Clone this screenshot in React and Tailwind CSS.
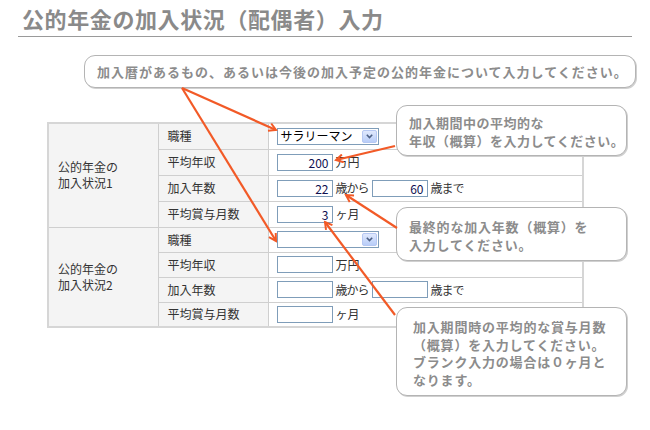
import React from "react";

const jp = { fontFamily: '"Noto Sans CJK JP", "Noto Sans", sans-serif' };

function Select({ value }) {
  return (
    <div className="flex items-center justify-between w-[102px] h-[17px] border border-[#7f9db9] bg-white pl-[3px] pr-[1px]">
      <span className="text-[12px] leading-none text-black">{value}</span>
      <div className="w-[15px] h-[13px] rounded-[2px] border border-[#b6c8f3] bg-gradient-to-b from-[#e0e9fd] to-[#b9cdf8] flex items-center justify-center">
        <svg width="7" height="5" viewBox="0 0 7 5">
          <path d="M0.8 0.8 L3.5 3.6 L6.2 0.8" fill="none" stroke="#4d6185" strokeWidth="1.6" />
        </svg>
      </div>
    </div>
  );
}

function Field({ value }) {
  return (
    <div className="w-[56px] h-[17px] border border-[#7f9db9] bg-white pr-[3px] text-right text-[12px] leading-[15px] text-[#101050]">
      {value}
    </div>
  );
}

function Group({ label, data, rowH }) {
  const th = "border border-[#cfcfcf] bg-[#f4f4f4] text-left font-normal text-[12px] text-[#333] align-middle";
  const td = "border border-[#cfcfcf] bg-white pl-[8px] align-middle";
  return (
    <>
      <tr className={rowH}>
        <th rowSpan={4} className={th + " pl-[9px] leading-[16px]"}>
          公的年金の
          <br />
          {label}
        </th>
        <th className={th + " pl-[9px]"}>職種</th>
        <td className={td}>
          <Select value={data.job} />
        </td>
      </tr>
      <tr className={rowH}>
        <th className={th + " pl-[9px]"}>平均年収</th>
        <td className={td}>
          <div className="flex items-center gap-[3px] text-[12px] text-[#333]">
            <Field value={data.income} />
            <span>万円</span>
          </div>
        </td>
      </tr>
      <tr className={rowH}>
        <th className={th + " pl-[9px]"}>加入年数</th>
        <td className={td}>
          <div className="flex items-center text-[12px] text-[#333]">
            <Field value={data.from} />
            <span className="ml-[3px] mr-[3px] tracking-[-1px]">歳から</span>
            <Field value={data.to} />
            <span className="ml-[3px] tracking-[-1px]">歳まで</span>
          </div>
        </td>
      </tr>
      <tr className={rowH}>
        <th className={th + " pl-[9px]"}>平均賞与月数</th>
        <td className={td}>
          <div className="flex items-center gap-[3px] text-[12px] text-[#333]">
            <Field value={data.bonus} />
            <span>ヶ月</span>
          </div>
        </td>
      </tr>
    </>
  );
}

function Callout({ className, children }) {
  return (
    <div
      className={
        "absolute bg-white border border-[#b4b4b4] rounded-[11px] shadow-[1px_1px_0_#d0d0d0] text-[13px] font-bold text-[#8c8c8c] leading-[17.5px] whitespace-nowrap " +
        className
      }
    >
      {children}
    </div>
  );
}

function Arrows() {
  const lines = [
    [182, 88, 276, 130],
    [182, 88, 276, 241],
    [395, 146, 336, 160],
    [397, 228, 346, 195],
    [395, 315, 325, 222],
  ];
  return (
    <svg className="absolute left-0 top-0 pointer-events-none" width="650" height="430">
      <defs>
        <marker id="head" markerWidth="10" markerHeight="10" refX="8" refY="5" orient="auto" markerUnits="userSpaceOnUse">
          <path d="M1 1 L8 5 L1 9" fill="none" stroke="#f25a27" strokeWidth="2" />
        </marker>
      </defs>
      {lines.map(([x1, y1, x2, y2], i) => (
        <line key={i} x1={x1} y1={y1} x2={x2} y2={y2} stroke="#f25a27" strokeWidth="2.2" markerEnd="url(#head)" />
      ))}
    </svg>
  );
}

export default function App() {
  return (
    <div className="relative w-[650px] h-[430px] bg-white overflow-hidden" style={jp}>
      <div className="mx-[18px] h-[37px] border-b border-[#9a9a9a] pl-[4px] pt-[3px] text-[22px] font-bold text-[#8a8a8a] leading-[30px] tracking-[0.6px]">
        公的年金の加入状況（配偶者）入力
      </div>

      <table className="ml-[47px] mt-[85px] w-[537px] border-collapse border-2 border-[#d6d6d6]">
        <colgroup>
          <col className="w-[110px]" />
          <col className="w-[110px]" />
          <col />
        </colgroup>
        <tbody>
          <Group label="加入状況1" rowH="h-[26px]" data={{ job: "サラリーマン", income: "200", from: "22", to: "60", bonus: "3" }} />
          <Group label="加入状況2" rowH="h-[25px]" data={{ job: "", income: "", from: "", to: "", bonus: "" }} />
        </tbody>
      </table>

      <Callout className="left-[84px] top-[55px] w-[552px] h-[33px] pl-[12px] pt-[7px] tracking-[1px]">
        加入暦があるもの、あるいは今後の加入予定の公的年金について入力してください。
      </Callout>
      <Callout className="left-[396px] top-[105px] w-[231px] h-[51px] pl-[12px] pt-[8px] tracking-[0.5px]">
        加入期間中の平均的な
        <br />
        年収（概算）を入力してください。
      </Callout>
      <Callout className="left-[396px] top-[207px] w-[231px] h-[54px] pl-[12px] pt-[10px] tracking-[0.8px]">
        最終的な加入年数（概算）を
        <br />
        入力してください。
      </Callout>
      <Callout className="left-[396px] top-[307px] w-[231px] h-[89px] pl-[16px] pt-[10px] tracking-[0.8px]">
        加入期間時の平均的な賞与月数
        <br />
        （概算）を入力してください。
        <br />
        ブランク入力の場合は０ヶ月と
        <br />
        なります。
      </Callout>

      <Arrows />
    </div>
  );
}
